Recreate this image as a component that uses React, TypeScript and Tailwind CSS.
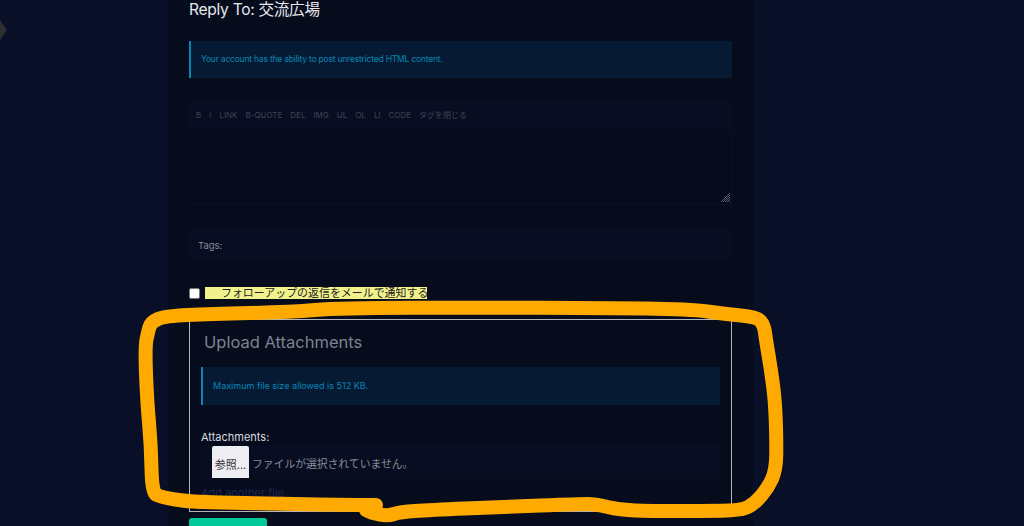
const font = { fontFamily: '"Inter", "Noto Sans CJK JP", sans-serif' };

function Info({ text, className }: { text: string; className: string }) {
  return (
    <div className={`flex items-center border-l-2 border-[#0a86b4] bg-[#061a33] pl-[10px] text-[#0a86b4] ${className}`}>
      {text}
    </div>
  );
}

const pts: [number, number][] = [
  [376, 505], [340, 505], [250, 503], [190, 502], [160, 497], [152, 492], [151, 445], [147, 400], [145, 347],
  [148, 332], [151, 322], [165, 316], [210, 314], [290, 312], [340, 308], [480, 307.5], [600, 308], [690, 309],
  [725, 314], [757, 317], [764, 325], [766, 340], [771, 370], [775, 400], [776.5, 440], [776, 470], [768, 488],
  [755, 503], [742, 510.5], [700, 511], [650, 511], [620, 510], [595, 504], [580, 504], [500, 507], [430, 510],
  [400, 512], [388, 516], [372, 513], [366, 510],
];

function smooth(p: [number, number][]) {
  let d = `M${p[0][0]} ${p[0][1]}`;
  for (let i = 1; i < p.length - 1; i++) {
    const mx = (p[i][0] + p[i + 1][0]) / 2;
    const my = (p[i][1] + p[i + 1][1]) / 2;
    d += `Q${p[i][0]} ${p[i][1]} ${mx} ${my}`;
  }
  const l = p[p.length - 1];
  return `${d}L${l[0]} ${l[1]}`;
}

export default function App() {
  const tools = ["B", "I", "LINK", "B-QUOTE", "DEL", "IMG", "UL", "OL", "LI", "CODE", "タグを閉じる"];
  return (
    <div style={font} className="relative h-[526px] w-[1024px] overflow-hidden bg-[#080f27]">
      <div className="ml-[168px] h-[526px] w-[585px] overflow-hidden bg-[#060c1c] px-[21px]">
        <h1 className="h-[18px] text-[15.6px] leading-[20px] tracking-[-0.3px] text-[#e6e8ec]">Reply To: 交流広場</h1>
        <Info text="Your account has the ability to post unrestricted HTML content." className="mt-[23px] h-[37px] text-[8.5px] tracking-[-0.2px]" />
        <div className="mt-[22px] flex h-[30px] items-center gap-[8px] bg-[#080d22] pl-[7px] text-[8px] text-[#3f4455]">
          {tools.map((t) => (
            <span key={t}>{t}</span>
          ))}
        </div>
        <div className="relative h-[75px] border border-t-0 border-[#0a1026]">
          <svg className="absolute right-[0px] bottom-[1px]" width="11" height="11" viewBox="0 0 11 11" stroke="#555a68" strokeWidth="1">
            <path d="M1 10 10 1M3 10l7-7M5 10l5-5M7 10l3-3M9 10l1-1" />
          </svg>
        </div>
        <div className="mt-[23px] flex h-[33px] items-center bg-[#080d22] pt-[3px] pl-[9px] text-[9.5px] text-[#8a8d99]">Tags:</div>
        <div className="mt-[26px] flex h-[12px] items-center">
          <span className="h-[11px] w-[11px] rounded-[2px] border border-[#767676] bg-white" />
          <span className="ml-[5px] h-[12px] w-[222px] bg-[#f2f28c] pl-[16px] text-[10.95px] leading-[12px] whitespace-nowrap text-[#222]">フォローアップの返信をメールで通知する</span>
        </div>
        <div className="mt-[20px] flex h-[193px] flex-col border border-[#b5b5b8] px-[11px]">
          <h2 className="mt-[12px] h-[20px] pl-[3px] text-[16.5px] leading-[20px] text-[#7f8290]">Upload Attachments</h2>
          <Info text="Maximum file size allowed is 512 KB." className="mt-[15px] h-[38px] text-[9px]" />
          <div className="mt-[25px] h-[15px] text-[11px] leading-[14px] text-[#d8dae0]">Attachments:</div>
          <div className="flex h-[33px] items-center bg-[#080d22] pl-[11px]">
            <span className="flex h-[32px] w-[37px] items-center justify-center rounded-t-[2px] bg-[#eeeef2] pt-[7px] text-[11px] text-[#333]">参照...</span>
            <span className="mt-[8px] ml-[3px] text-[10.8px] text-[#8a8d99]">ファイルが選択されていません。</span>
          </div>
          <div className="mt-[8px] text-[11px] leading-[14px] text-[#1f2650]">Add another file</div>
        </div>
        <div className="mt-[6px] h-[20px] w-[78px] rounded-[3px] bg-[#00c896]" />
      </div>
      <svg className="absolute top-0 left-0" width="1024" height="526" fill="none">
        <path d="M0 20 7 30 0 40Z" fill="#2d3030" />
        <path d={smooth(pts)} stroke="#ffaa00" strokeWidth="14" strokeLinejoin="round" strokeLinecap="round" />
      </svg>
    </div>
  );
}
